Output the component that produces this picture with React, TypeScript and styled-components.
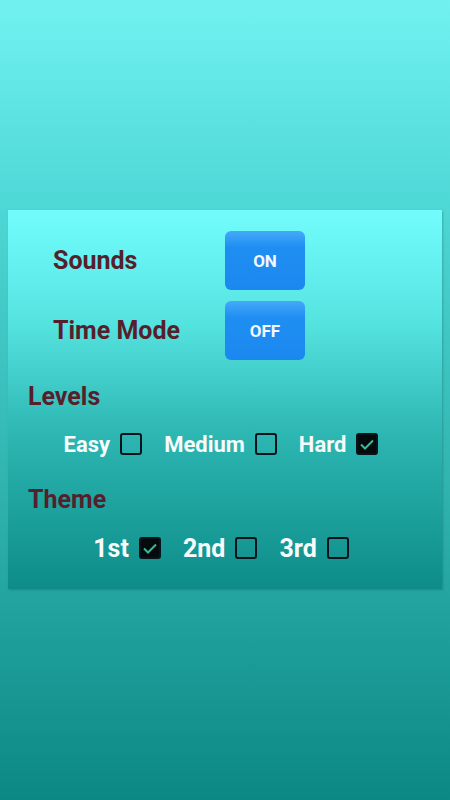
import { createGlobalStyle, styled } from 'styled-components'

const GlobalStyle = createGlobalStyle`
	html, body {
		margin: 0;
		padding: 0;
	}
	body {
		font-family: Roboto, 'Noto Sans', sans-serif;
	}
`

const levels = [
	{ name: 'Easy', checked: false },
	{ name: 'Medium', checked: false },
	{ name: 'Hard', checked: true },
]

const themes = [
	{ name: '1st', checked: true },
	{ name: '2nd', checked: false },
	{ name: '3rd', checked: false },
]

function Check({ checked }: { checked: boolean }) {
	return (
		<Box $checked={checked}>
			{checked && (
				<svg width="16" height="16" viewBox="0 0 16 16">
					<path
						d="M2 8.5 L6 12.5 L14 4.5"
						fill="none"
						stroke="#3cb89a"
						strokeWidth="2"
					/>
				</svg>
			)}
		</Box>
	)
}

function App() {
	return (
		<Page>
			<GlobalStyle />
			<Panel>
				<ToggleRow>
					<Label>Sounds</Label>
					<Toggle>ON</Toggle>
				</ToggleRow>
				<ToggleRow>
					<Label>Time Mode</Label>
					<Toggle>OFF</Toggle>
				</ToggleRow>
				<Heading $top={11}>Levels</Heading>
				<OptionRow $top={17}>
					{levels.map((l) => (
						<Option key={l.name}>
							<OptionText $size={22}>{l.name}</OptionText>
							<Check checked={l.checked} />
						</Option>
					))}
				</OptionRow>
				<Heading $top={26}>Theme</Heading>
				<OptionRow $top={18}>
					{themes.map((t) => (
						<Option key={t.name}>
							<OptionText $size={25}>{t.name}</OptionText>
							<Check checked={t.checked} />
						</Option>
					))}
				</OptionRow>
			</Panel>
		</Page>
	)
}

export default App

const Page = styled.div`
	width: 100vw;
	height: 100vh;
	box-sizing: border-box;
	padding-top: 210px;
	background: linear-gradient(#71f2f1 0%, #4ed8d6 25%, #2fb2ae 62%, #0b8884 100%);
	display: flex;
	flex-direction: column;
	align-items: center;
`
const Panel = styled.div`
	width: 434px;
	height: 379px;
	box-sizing: border-box;
	padding-top: 21px;
	background: linear-gradient(#72fdfc 0%, #55e3e0 30%, #2cb5b1 60%, #0d8c88 100%);
	box-shadow: 1px 1px 2px rgba(0, 60, 60, 0.25);
	display: flex;
	flex-direction: column;
`
const ToggleRow = styled.div`
	display: flex;
	align-items: center;
	padding-left: 45px;
	margin-bottom: 11px;
`
const Label = styled.div`
	width: 172px;
	font-size: 25px;
	font-weight: 700;
	color: #571e2c;
`
const Toggle = styled.div`
	width: 80px;
	height: 59px;
	border-radius: 6px;
	background: linear-gradient(#45a9f8 0%, #1f8ef2 28%, #1b88ef 100%);
	color: #f4f8ff;
	font-size: 17px;
	font-weight: 700;
	display: flex;
	align-items: center;
	justify-content: center;
`
const Heading = styled.div<{ $top: number }>`
	padding-left: 20px;
	margin-top: ${(p) => p.$top}px;
	font-size: 25px;
	font-weight: 700;
	color: #571e2c;
	line-height: 30px;
`
const OptionRow = styled.div<{ $top: number }>`
	display: flex;
	justify-content: center;
	gap: 22px;
	padding-right: 8px;
	margin-top: ${(p) => p.$top}px;
	height: 30px;
	align-items: center;
`
const Option = styled.div`
	display: flex;
	align-items: center;
	gap: 10px;
`
const OptionText = styled.span<{ $size: number }>`
	font-size: ${(p) => p.$size}px;
	font-weight: 700;
	color: #f6fbfb;
`
const Box = styled.div<{ $checked: boolean }>`
	width: 22px;
	height: 22px;
	box-sizing: border-box;
	border: 2.5px solid #07141c;
	border-radius: 3px;
	background: ${(p) => (p.$checked ? '#050a0c' : 'transparent')};
	display: flex;
	align-items: center;
	justify-content: center;
`
